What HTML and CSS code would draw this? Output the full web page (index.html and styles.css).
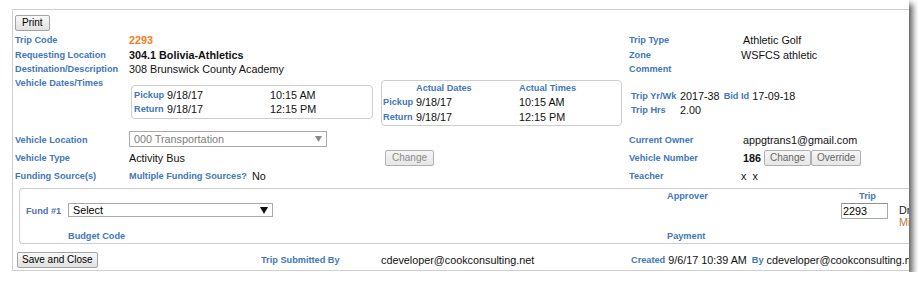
FILE: index.html
```html
<!DOCTYPE html>
<html>
<head>
<meta charset="utf-8">
<title>Trip</title>
<link rel="stylesheet" href="styles.css">
</head>
<body>
<div class="frame">
  <div class="panel">
    <div class="toolbar"><button class="btn">Print</button></div>

    <div class="info">
      <div class="lbl">Trip Code</div>
      <div class="val code">2293</div>
      <div class="lbl">Trip Type</div>
      <div class="val">Athletic Golf</div>

      <div class="lbl">Requesting Location</div>
      <div class="val strong">304.1 Bolivia-Athletics</div>
      <div class="lbl">Zone</div>
      <div class="val shift">WSFCS athletic</div>

      <div class="lbl">Destination/Description</div>
      <div class="val">308 Brunswick County Academy</div>
      <div class="lbl">Comment</div>
      <div class="val"></div>
    </div>

    <div class="dates">
      <div class="lbl dates-lbl">Vehicle Dates/Times</div>
      <div class="box vbox">
        <div class="drow"><span class="lbl">Pickup</span><span class="val">9/18/17</span><span class="val">10:15 AM</span></div>
        <div class="drow"><span class="lbl">Return</span><span class="val">9/18/17</span><span class="val">12:15 PM</span></div>
      </div>
      <div class="box abox">
        <div class="drow head"><span></span><span class="lbl">Actual Dates</span><span class="lbl">Actual Times</span></div>
        <div class="drow tall"><span class="lbl">Pickup</span><span class="val">9/18/17</span><span class="val">10:15 AM</span></div>
        <div class="drow tall"><span class="lbl">Return</span><span class="val">9/18/17</span><span class="val">12:15 PM</span></div>
      </div>
      <div class="tripinfo">
        <div class="trow"><span class="lbl tl">Trip Yr/Wk</span><span class="val">2017-38</span><span class="lbl bid">Bid Id</span><span class="val">17-09-18</span></div>
        <div class="trow"><span class="lbl tl">Trip Hrs</span><span class="val">2.00</span></div>
      </div>
    </div>

    <div class="info2">
      <div class="lbl">Vehicle Location</div>
      <div class="cell-top">
        <div class="sel sel-loc"><span>000 Transportation</span><svg class="arrow" width="7" height="6" viewBox="0 0 7 6"><polygon points="0,0 7,0 3.5,6" fill="#8a8a8a"/></svg></div>
      </div>
      <div class="lbl">Current Owner</div>
      <div class="val">appgtrans1@gmail.com</div>

      <div class="lbl">Vehicle Type</div>
      <div class="mid"><span class="val vt">Activity Bus</span><button class="btn dis">Change</button></div>
      <div class="lbl">Vehicle Number</div>
      <div class="mid"><span class="val strong">186</span><button class="btn soft first">Change</button><button class="btn soft">Override</button></div>

      <div class="lbl">Funding Source(s)</div>
      <div class="mid"><span class="lbl mfs">Multiple Funding Sources?</span><span class="val">No</span></div>
      <div class="lbl">Teacher</div>
      <div class="val shift">x&nbsp;&nbsp;x</div>
    </div>

    <div class="fund">
      <div class="lbl approver">Approver</div>
      <div class="lbl trip-h">Trip</div>

      <div class="lbl fund-lbl">Fund #1</div>
      <div class="fund-sel">
        <div class="sel sel-fund"><span>Select</span><svg class="arrow" width="8" height="7" viewBox="0 0 8 7"><polygon points="0,0 8,0 4,7" fill="#111"/></svg></div>
      </div>
      <div class="trip-in"><div class="input">2293</div></div>
      <div class="drmi"><div class="dr">Dr</div><div class="mi">Mi</div></div>

      <div class="lbl budget">Budget Code</div>
      <div class="lbl payment">Payment</div>
    </div>

    <div class="bottom">
      <div><button class="btn save">Save and Close</button></div>
      <div class="lbl">Trip Submitted By</div>
      <div class="val">cdeveloper@cookconsulting.net</div>
      <div class="created">
        <span class="lbl">Created</span>
        <span class="val c-date">9/6/17 10:39 AM</span>
        <span class="lbl c-by">By</span>
        <span class="val c-user">cdeveloper@cookconsulting.net</span>
      </div>
    </div>
  </div>
</div>
</body>
</html>
```

FILE: styles.css
```css
* { box-sizing: border-box; }
html, body { margin: 0; padding: 0; background: #fff; }
body {
  font-family: "Liberation Sans", Arial, sans-serif;
  font-size: 10.8px;
  color: #111;
}

.frame {
  width: 909px;
  height: 272px;
  padding: 9px 0 0 12px;
  overflow: hidden;
  background: #fff;
  box-shadow: 4px 4px 6px rgba(0, 0, 0, 0.6), 0 0 2px rgba(0, 0, 0, 0.12);
}

.panel {
  width: 1100px;
  border: 1px solid #cfcfcf;
  border-right: none;
  padding: 5px 0 2px 2px;
}

.lbl {
  font-size: 9.2px;
  font-weight: bold;
  color: #4277ba;
  line-height: 14px;
  white-space: nowrap;
}
.val {
  font-size: 10.8px;
  line-height: 14px;
  white-space: nowrap;
}
.strong { font-weight: bold; }
.code { font-weight: bold; color: #f47c20; }
.shift { margin-left: -2px; }

.btn {
  font-family: "Liberation Sans", Arial, sans-serif;
  font-size: 10px;
  height: 16px;
  line-height: 14px;
  padding: 0 6px;
  margin: 0;
  border: 1px solid #a3a3a3;
  border-radius: 2px;
  background: linear-gradient(#f8f8f8, #e1e1e1);
  color: #000;
  display: block;
}
.btn.dis { color: #8a8a8a; background: linear-gradient(#f6f6f6, #e6e6e6); border-color: #b0b0b0; }
.btn.soft { color: #666; background: linear-gradient(#f6f6f6, #e6e6e6); border-color: #b0b0b0; padding: 0 5px; }
.btn.first { margin-left: 3px; }
.btn.save { padding: 0 4px; }

.toolbar { height: 16px; margin-bottom: 2px; }

.info {
  display: grid;
  grid-template-columns: 114px 500px 114px 300px;
  grid-template-rows: 14px 15px 14px;
  align-items: center;
}

.dates {
  display: flex;
  align-items: flex-start;
  height: 50px;
}
.dates-lbl { width: 114px; }
.box {
  border: 1px solid #cdcdcd;
  border-radius: 4px;
}
.vbox {
  margin: 9px 0 0 2px;
  width: 242px;
  padding: 2px 0 2px 2px;
}
.abox {
  margin: 4px 0 0 8px;
  width: 241px;
  padding: 0 0 1px 1px;
}
.drow {
  display: grid;
  grid-template-columns: 33px 103px auto;
  height: 14px;
  align-items: center;
}
.drow.head { height: 13px; }
.drow.tall { height: 15px; }

.tripinfo { margin: 13px 0 0 9px; }
.trow {
  display: flex;
  align-items: center;
  height: 14px;
}
.tl { width: 49px; }
.bid { margin: 0 3px 0 4px; }

.info2 {
  margin-top: 5px;
  display: grid;
  grid-template-columns: 114px 500px 114px 300px;
  grid-template-rows: 18px 18px 18px;
  align-items: center;
}
.cell-top { align-self: start; }
.mid { display: flex; align-items: center; }
.vt { width: 256px; }
.mfs { width: 123px; }

.sel {
  display: flex;
  align-items: center;
  justify-content: space-between;
  border: 1px solid #a9a9a9;
  background: #fff;
  white-space: nowrap;
}
.sel-loc {
  width: 198px;
  height: 16px;
  padding: 0 4px 0 4px;
  color: #7d7d7d;
  font-size: 10.8px;
}
.sel-fund {
  width: 205px;
  height: 14px;
  padding: 0 4px 0 4px;
  color: #000;
  font-size: 10.8px;
}
.arrow { display: block; flex: none; }

.fund {
  margin: 3px 0 0 4px;
  border: 1px solid #cdcdcd;
  border-right: none;
  border-radius: 4px 0 0 4px;
  padding-left: 6px;
  display: grid;
  grid-template-columns: 42px 599px 174px 53px 200px;
  grid-template-rows: 14px 16px 24px;
  align-items: center;
}
.approver { grid-column: 3; grid-row: 1; }
.trip-h { grid-column: 4; grid-row: 1; text-align: center; }
.fund-lbl { grid-column: 1; grid-row: 2; color: #5670b0; }
.fund-sel { grid-column: 2; grid-row: 2; align-self: start; }
.trip-in { grid-column: 4; grid-row: 2; align-self: start; }
.input {
  width: 47px;
  height: 16px;
  border: 1px solid #a9a9a9;
  border-top-color: #8f8f8f;
  padding-left: 1px;
  font-size: 10.8px;
  line-height: 14px;
  color: #000;
}
.drmi {
  grid-column: 5;
  grid-row: 2 / 4;
  align-self: start;
  padding: 1px 0 0 5px;
  font-size: 10.8px;
  line-height: 12px;
}
.dr { color: #222; }
.mi { color: #b87a3e; }
.budget { grid-column: 2; grid-row: 3; align-self: end; }
.payment { grid-column: 3; grid-row: 3; align-self: end; }

.bottom {
  margin-top: 8px;
  display: grid;
  grid-template-columns: 246px 120px 250px 400px;
  height: 16px;
  align-items: center;
}
.save { margin-left: 2px; }
.created { display: flex; align-items: center; }
.c-date { margin-left: 3px; }
.c-by { margin-left: 5px; }
.c-user { margin-left: 3px; }
```
